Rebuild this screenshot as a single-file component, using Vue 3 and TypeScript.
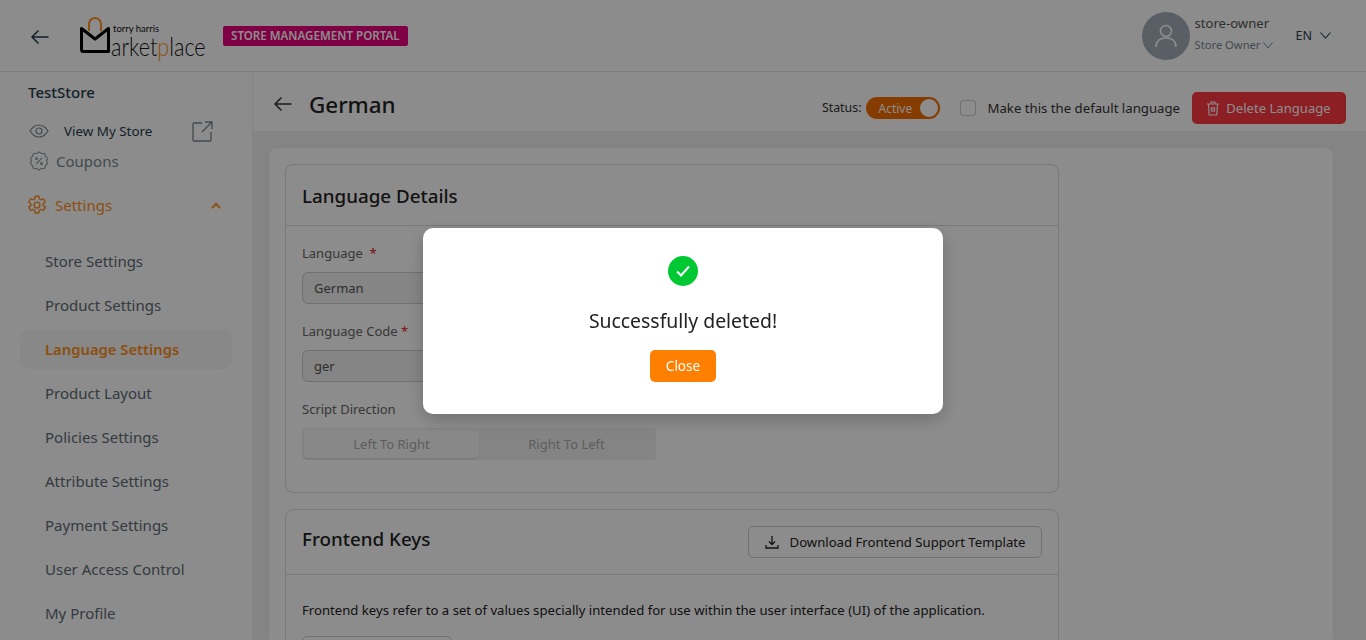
<template>
  <div class="app">
    <header class="topbar">
      <svg class="back" width="20" height="16" viewBox="0 0 20 16" fill="none" stroke="#1f3d4d" stroke-width="1.5">
        <path d="M18.5 8H2M8.5 1.5 2 8l6.5 6.5" />
      </svg>
      <div class="logo">
        <svg class="bag" width="34" height="38" viewBox="0 0 34 38" fill="none">
          <path d="M9 15V8a6 6 0 0 1 12 0v7" stroke="#ff9020" stroke-width="2" />
          <path d="M1.500 12.500 15 23 28.500 12.500V35.500H3.500a2 2 0 0 1-2-2Z" stroke="#000" stroke-width="3" stroke-linejoin="round" />
        </svg>
        <span class="logo-top">torry harris</span>
        <span class="logo-word">arket<em>p</em>lace</span>
      </div>
      <span class="portal">STORE MANAGEMENT PORTAL</span>
      <div class="user">
        <div class="avatar">
          <svg width="24" height="26" viewBox="0 0 24 26" fill="none" stroke="#fff" stroke-width="1.6">
            <circle cx="12" cy="8" r="5.5" />
            <path d="M2 24c0-6 4-9 10-9s10 3 10 9" />
          </svg>
        </div>
        <div class="user-text">
          <div class="user-name">store-owner</div>
          <div class="user-role">Store Owner
            <svg width="10" height="7" viewBox="0 0 10 7" fill="none" stroke="#7a8791" stroke-width="1"><path d="M.5.500 5 6 9.500.500" /></svg>
          </div>
        </div>
        <div class="lang">EN
          <svg width="11" height="7" viewBox="0 0 11 7" fill="none" stroke="#1f3d4d" stroke-width="1.1"><path d="M.5.5 5.500 6l5-5.500" /></svg>
        </div>
      </div>
    </header>

    <div class="body">
      <aside class="sidebar">
        <div class="store">TestStore</div>
        <div class="view-store">
          <svg width="20" height="14" viewBox="0 0 20 14" fill="none" stroke="#7a8791" stroke-width="1.2">
            <path d="M1 7c2.500-4 5.500-6 9-6s6.500 2 9 6c-2.500 4-5.500 6-9 6s-6.500-2-9-6Z" />
            <circle cx="10" cy="7" r="3" />
          </svg>
          <span>View My Store</span>
          <svg class="ext" width="21" height="21" viewBox="0 0 21 21" fill="none" stroke="#7a8791" stroke-width="1.3">
            <path d="M10 2H2a1 1 0 0 0-1 1v16a1 1 0 0 0 1 1h16a1 1 0 0 0 1-1v-8M13 1h7v7M20 1 10 11" />
          </svg>
        </div>
        <div class="coupons">
          <svg width="20" height="20" viewBox="0 0 20 20" fill="none" stroke="#8f9aa3" stroke-width="1.1">
            <path d="M10 1l2.500 1.500h3l1 2.700 2 2.300-1 2.500 1 2.500-2 2.300-1 2.700h-3L10 19l-2.500-1.500h-3l-1-2.700-2-2.300 1-2.500-1-2.500 2-2.300 1-2.700h3Z" />
            <path d="M7 13l6-6" />
            <circle cx="7.500" cy="7.500" r="1" />
            <circle cx="12.500" cy="12.500" r="1" />
          </svg>
          Coupons
        </div>
        <div class="settings">
          <svg width="20" height="20" viewBox="0 0 24 24" fill="none" stroke="#ff9020" stroke-width="1.7" stroke-linejoin="round">
            <circle cx="12" cy="12" r="3.500" />
            <path d="M9.800 1.500h4.400l.6 3.200 1.800 1 3.100-1.100 2.200 3.800-2.500 2.100v2l2.500 2.100-2.200 3.800-3.100-1.100-1.800 1-.6 3.200H9.800l-.6-3.200-1.800-1-3.100 1.100-2.200-3.800 2.500-2.100v-2L2.100 8.400l2.200-3.800 3.100 1.100 1.800-1Z" />
          </svg>
          <span>Settings</span>
          <svg class="caret" width="10" height="7" viewBox="0 0 10 7" fill="none" stroke="#ff9020" stroke-width="2"><path d="M1 6l4-4 4 4" /></svg>
        </div>
        <nav class="nav">
          <a v-for="item in navItems" :key="item" :class="{ active: item === 'Language Settings' }">{{ item }}</a>
        </nav>
      </aside>

      <main class="main">
        <div class="titlebar">
          <svg class="back" width="20" height="16" viewBox="0 0 20 16" fill="none" stroke="#333" stroke-width="1.500">
            <path d="M18.500 8H2M8.500 1.500 2 8l6.500 6.500" />
          </svg>
          <h1>German</h1>
          <div class="title-actions">
            <span class="status-label">Status:</span>
            <span class="toggle">Active<i></i></span>
            <span class="check"></span>
            <span class="default-label">Make this the default language</span>
            <button class="delete">
              <svg width="12" height="15" viewBox="0 0 12 15" fill="none" stroke="#fff" stroke-width="1.200">
                <path d="M0 3h12M4 3V1h4v2M1.500 3l.7 11h7.600l.7-11" />
                <rect x="4.500" y="7" width="3" height="3" />
              </svg>
              Delete Language
            </button>
          </div>
        </div>

        <div class="content">
          <div class="sheet">
            <section class="card">
              <div class="card-head"><h2>Language Details</h2></div>
              <div class="card-body details">
                <label class="first">Language <b>&nbsp;*</b></label>
                <div class="input">German</div>
                <label>Language Code <b>*</b></label>
                <div class="input">ger</div>
                <label>Script Direction</label>
                <div class="segment">
                  <span class="on">Left To Right</span>
                  <span>Right To Left</span>
                </div>
              </div>
            </section>

            <section class="card">
              <div class="card-head keys">
                <h2>Frontend Keys</h2>
                <button class="download">
                  <svg width="14" height="13" viewBox="0 0 14 13" fill="none" stroke="#222" stroke-width="1.300">
                    <path d="M7 0v8M4 5.500 7 8.500l3-3M1 9v3h12V9" />
                  </svg>
                  Download Frontend Support Template
                </button>
              </div>
              <div class="card-body">
                <p class="keys-text">Frontend keys refer to a set of values specially intended for use within the user interface (UI) of the application.</p>
                <div class="stub"></div>
              </div>
            </section>
          </div>
        </div>
      </main>
    </div>

    <div class="overlay">
      <div class="modal">
        <div class="ok">
          <svg width="14" height="12" viewBox="0 0 14 12" fill="none" stroke="#fff" stroke-width="2"><path d="M1 6.500 5 10.500 13 1.500" /></svg>
        </div>
        <div class="msg">Successfully deleted!</div>
        <button class="close">Close</button>
      </div>
    </div>
  </div>
</template>

<script setup lang="ts">
const navItems: string[] = [
  'Store Settings',
  'Product Settings',
  'Language Settings',
  'Product Layout',
  'Policies Settings',
  'Attribute Settings',
  'Payment Settings',
  'User Access Control',
  'My Profile',
]
</script>

<style>
html, body {
  margin: 0;
  height: 100%;
  overflow: hidden;
}
</style>

<style scoped>
.app {
  height: 640px;
  overflow: hidden;
  font-family: "Noto Sans", "Open Sans", sans-serif;
  color: #222;
  background: #fff;
  display: flex;
  flex-direction: column;
}

.topbar {
  height: 71px;
  flex: none;
  display: flex;
  align-items: center;
  padding: 0 35px 0 30px;
  border-bottom: 1px solid #e2e2e2;
}
.topbar .back { margin-top: 2px; }
.logo {
  position: relative;
  width: 128px;
  height: 42px;
  margin-left: 30px;
  margin-top: -4px;
}
.bag { position: absolute; left: 0; top: 3px; }
.logo-top {
  position: absolute;
  left: 33px;
  top: 11.500px;
  font: 9.500px/10px "Lato", sans-serif;
  color: #111;
  white-space: nowrap;
}
.logo-word {
  position: absolute;
  left: 31px;
  top: 23.500px;
  font: 300 26px/20px "Lato", sans-serif;
  color: #111;
  white-space: nowrap;
  transform: scaleX(.83);
  transform-origin: left center;
}
.logo-word em { font-style: normal; color: #ff9020; }
.portal {
  margin-left: 15px;
  background: #e8007c;
  color: #fff;
  font-size: 11.600px;
  font-weight: 600;
  line-height: 20px;
  padding: 0 8px;
  border-radius: 2px;
  white-space: nowrap;
}
.user {
  margin-left: auto;
  display: flex;
  align-items: center;
}
.avatar {
  width: 48px;
  height: 48px;
  border-radius: 50%;
  background: #a5aeb8;
  display: flex;
  align-items: center;
  justify-content: center;
}
.user-text { margin: -4px 0 0 5px; width: 91px; }
.user-name { font-size: 13.100px; line-height: 20px; color: #555; }
.user-role { font-size: 11.200px; line-height: 20px; color: #7a8791; margin-top: 2px; white-space: nowrap; }
.lang {
  font-size: 12.500px;
  color: #1f3d4d;
  display: flex;
  align-items: center;
  gap: 8px;
  margin-left: 10px;
}

.body { flex: 1; display: flex; min-height: 0; }

.sidebar {
  flex: none;
  border-right: 1px solid #eee;
  padding: 10px 20px 0 0;
  box-sizing: border-box;
  width: 253px;
}
.store { margin-left: 28px; font-size: 15px; font-weight: 500; line-height: 21px; color: #1f3d4d; }
.view-store {
  margin: 17px 0 0 29px;
  height: 22px;
  display: flex;
  align-items: center;
  font-size: 13.400px;
  color: #1f3d4d;
}
.view-store span { margin-left: 15px; }
.view-store .ext { margin-left: 40px; }
.coupons {
  margin: 8px 0 0 29px;
  display: flex;
  align-items: center;
  gap: 7px;
  font-size: 15px;
  line-height: 22px;
  color: #7a8791;
}
.settings {
  margin: 22px 0 0 27px;
  display: flex;
  align-items: center;
  gap: 8px;
  font-size: 15px;
  line-height: 22px;
  color: #ff9020;
}
.settings .caret { margin-left: auto; margin-right: 11px; }
.nav { margin: 25px 0 0 20px; display: flex; flex-direction: column; gap: 4px; }
.nav a {
  height: 40px;
  line-height: 40px;
  padding-left: 25px;
  font-size: 15px;
  color: #5d6b75;
  border-radius: 10px;
}
.nav a.active { background: #f7f7f7; color: #ff9020; font-weight: 600; font-size: 14.800px; }

.main { flex: 1; min-width: 0; display: flex; flex-direction: column; background: #f3f3f3; }
.titlebar {
  height: 59px;
  flex: none;
  background: #fff;
  display: flex;
  align-items: center;
  padding: 0 20px;
  box-sizing: border-box;
}
.titlebar .back { margin-top: 4px; }
.titlebar h1 {
  margin: 6px 0 0 16px;
  font-size: 22.400px;
  font-weight: 500;
  color: #222;
}
.title-actions { margin-left: auto; display: flex; align-items: center; margin-top: 13px; }
.status-label { font-size: 12.400px; color: #333; margin-top: -2px; }
.toggle {
  position: relative;
  margin-left: 4px;
  width: 74px;
  height: 22px;
  box-sizing: border-box;
  padding-left: 13px;
  border-radius: 11px;
  background: #f46c00;
  color: #fff;
  font-size: 12px;
  line-height: 24px;
}
.toggle i {
  position: absolute;
  right: 2px;
  top: 2px;
  width: 18px;
  height: 18px;
  border-radius: 50%;
  background: #fff;
}
.check {
  width: 14px;
  height: 14px;
  margin-left: 20px;
  border: 1px solid #ccc;
  border-radius: 3px;
}
.default-label { margin-left: 12px; font-size: 13.200px; color: #333; }
.delete {
  margin-left: 12px;
  width: 154px;
  height: 32px;
  border: 0;
  border-radius: 5px;
  background: #ff3a42;
  color: #fff;
  font: 13.100px "Noto Sans", sans-serif;
  display: flex;
  align-items: center;
  justify-content: center;
  gap: 7px;
}

.content { flex: 1; padding: 17px 33px 0 16px; min-height: 0; }
.sheet {
  height: 100%;
  box-sizing: border-box;
  background: #fff;
  border-radius: 8px 8px 0 0;
  padding: 16px;
  box-shadow: 0 0 8px rgba(0, 0, 0, .06);
}
.card {
  width: 774px;
  box-sizing: border-box;
  border: 1px solid #ddd;
  border-radius: 8px;
  margin-bottom: 16px;
}
.card-head {
  height: 61px;
  box-sizing: border-box;
  padding: 0 16px;
  display: flex;
  align-items: center;
  justify-content: space-between;
  border-bottom: 1px solid #ddd;
}
.card-head.keys { height: 65px; }
.card-head h2 { margin: 2px 0 0; font-size: 18.800px; font-weight: 500; color: #222; }
.card-head.keys h2 { margin: -6px 0 0; }
.card-body { padding: 0 16px; }
.details { padding-bottom: 32px; }
.details label { display: block; font-size: 13px; line-height: 20px; color: #666; margin-top: 12px; }
.details label.first { margin-top: 17px; }
.details label b { color: #e02020; font-weight: 400; }
.input {
  margin-top: 9px;
  width: 354px;
  height: 32px;
  box-sizing: border-box;
  border: 1px solid #ccc;
  border-radius: 6px;
  background: #f2f2f2;
  padding-left: 11px;
  font-size: 13px;
  line-height: 30px;
  color: #555;
}
.details .input + label { margin-top: 17px; }
.segment {
  margin-top: 9px;
  width: 354px;
  height: 32px;
  box-sizing: border-box;
  padding: 2px;
  background: #f1f1f1;
  border-radius: 4px;
  display: flex;
  font-size: 13px;
  color: #aaa;
}
.segment span { flex: 1; text-align: center; line-height: 28px; border-radius: 4px; }
.segment .on { background: #f8f8f8; box-shadow: 0 1px 2px rgba(0, 0, 0, .12); }
.download {
  width: 294px;
  height: 32px;
  border: 1px solid #ccc;
  border-radius: 5px;
  background: #fff;
  color: #222;
  font: 13.150px "Noto Sans", sans-serif;
  display: flex;
  align-items: center;
  justify-content: center;
  gap: 11px;
}
.keys-text { margin: 26px 0 0; font-size: 13.150px; line-height: 18px; color: #222; }
.stub {
  margin-top: 17px;
  width: 150px;
  height: 32px;
  box-sizing: border-box;
  border: 1px solid #ccc;
  border-radius: 5px;
}

.overlay {
  position: fixed;
  inset: 0;
  background: rgba(0, 0, 0, .45);
  display: flex;
  align-items: center;
  justify-content: center;
}
.modal {
  width: 520px;
  height: 186px;
  margin-top: 2px;
  box-sizing: border-box;
  background: #fff;
  border-radius: 10px;
  box-shadow: 0 6px 18px rgba(0, 0, 0, .2);
  display: flex;
  flex-direction: column;
  align-items: center;
  padding-top: 28px;
}
.ok {
  width: 30px;
  height: 30px;
  border-radius: 50%;
  background: #00c832;
  display: flex;
  align-items: center;
  justify-content: center;
}
.msg { margin-top: 22px; font-size: 19.400px; line-height: 26px; color: #222; }
.close {
  margin-top: 16px;
  width: 66px;
  height: 32px;
  border: 0;
  border-radius: 5px;
  background: #ff8000;
  color: #fff;
  font: 13.500px "Noto Sans", sans-serif;
}
</style>
